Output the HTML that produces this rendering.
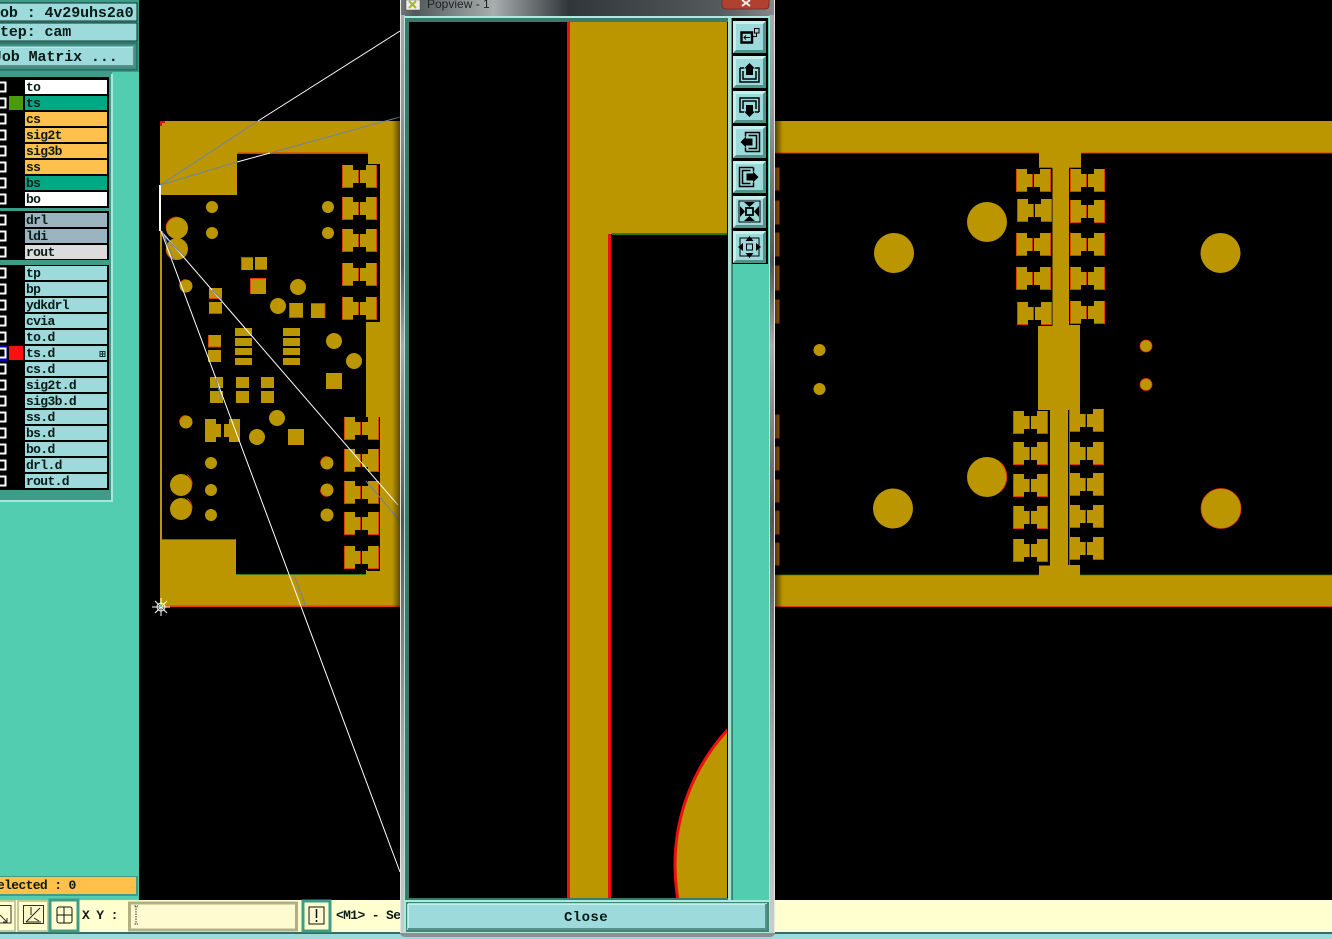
<!DOCTYPE html>
<html><head><meta charset="utf-8"><style>
html,body{margin:0;padding:0;background:#000;overflow:hidden;width:1332px;height:939px}
svg{display:block}
text{font-family:"Liberation Mono",monospace;font-weight:bold;fill:#0a1a14}
.l{font-size:13px;letter-spacing:-.65px}
.t{font-size:15px;letter-spacing:-.1px}
</style></head><body>
<svg width="1332" height="939" viewBox="0 0 1332 939" xmlns="http://www.w3.org/2000/svg" style="overflow:hidden">
<defs>
<linearGradient id="title" x1="0" x2="1" y1="0" y2="0"><stop offset="0" stop-color="#777"/><stop offset=".04" stop-color="#50585a"/><stop offset=".17" stop-color="#8a9090"/><stop offset=".25" stop-color="#a8aeae"/><stop offset=".45" stop-color="#30363a"/><stop offset=".85" stop-color="#555a5c"/><stop offset="1" stop-color="#888"/></linearGradient>
<linearGradient id="sideV" x1="0" x2="0" y1="0" y2="1"><stop offset="0" stop-color="#aaa"/><stop offset=".1" stop-color="#999"/><stop offset=".27" stop-color="#555"/><stop offset=".36" stop-color="#aaa"/><stop offset=".55" stop-color="#555"/><stop offset=".8" stop-color="#aaa"/><stop offset="1" stop-color="#ccc"/></linearGradient>
<linearGradient id="fade" x1="0" x2="1" y1="0" y2="0"><stop offset="0" stop-color="#000" stop-opacity=".55"/><stop offset="1" stop-color="#000" stop-opacity="0"/></linearGradient>
<linearGradient id="fade2" x1="1" x2="0" y1="0" y2="0"><stop offset="0" stop-color="#000" stop-opacity=".5"/><stop offset="1" stop-color="#000" stop-opacity="0"/></linearGradient>
<g id="pad2"><path d="M0 0H11V5H16V18H11V23H0Z" fill="#bc9600"/><path d="M.5 0V22.500H11M16.500 5V18" fill="none" stroke="#e03a00" stroke-width=".9"/><path d="M35 0H24V5H18V18H24V23H35Z" fill="#bc9600"/><path d="M24 22.500H34.500V0" fill="none" stroke="#e03a00" stroke-width=".9"/></g>
<g id="cb"><rect x="-3" y="-.5" width="8.5" height="9" fill="#000" stroke="#fff" stroke-width="2"/></g>
<g id="btn"><rect width="33" height="32" fill="#9cdadc"/><path d="M0 0H33L30 3H3V29L0 32Z" fill="#c6f0ec"/><path d="M33 0V32H0L3 29H30V3Z" fill="#4f9488"/></g>
<g id="arr"><path d="M7 12V26H26V12H22M11 12H7" fill="none" stroke="#000" stroke-width="1.500"/><path d="M10 15V23H23V15" fill="none" stroke="#000" stroke-width="1.500"/><path d="M16.500 7L22 12.500H20V19H13V12.500H11Z" fill="#000"/></g>
</defs>

<rect width="1332" height="939" fill="#000"/>

<!-- left panel -->
<rect x="0" y="0" width="139" height="900" fill="#52cdb0"/>
<rect x="0" y="0" width="139" height="72" fill="#3f9c88"/>
<rect x="-2" y="3" width="139" height="18" fill="#9cdadc" stroke="#10302a"/>
<rect x="-2" y="23" width="139" height="18" fill="#9cdadc" stroke="#10302a"/>
<rect x="-2" y="43" width="139" height="27" fill="#3f8c80" stroke="#1d5a50"/>
<rect x="-2" y="47" width="136" height="19" fill="#9cdadc"/>
<path d="M-2 47H134" stroke="#c8f0f0"/><path d="M134 47V66H-2" stroke="#5a8e88" stroke-width="2" fill="none"/>
<text class="t" x="0" y="17">ob : 4v29uhs2a0</text>
<text class="t" x="0" y="36">tep: cam</text>
<text class="t" x="-7" y="61">Job Matrix ...</text>

<rect x="0" y="72" width="112" height="430" fill="#3f9c88"/>
<rect x="111" y="74" width="2" height="427" fill="#a8e8d8"/>
<rect x="0" y="500" width="113" height="2" fill="#a8e8d8"/>
<rect x="0" y="77" width="109" height="131" fill="#000"/>
<rect x="0" y="211" width="109" height="49" fill="#000"/>
<rect x="0" y="265" width="109" height="225" fill="#000"/>

<rect x="25" y="80" width="82" height="14" fill="#fff"/>
<rect x="25" y="96" width="82" height="14" fill="#00a884"/>
<rect x="25" y="112" width="82" height="14" fill="#ffc04c"/>
<rect x="25" y="128" width="82" height="14" fill="#ffc04c"/>
<rect x="25" y="144" width="82" height="14" fill="#ffc04c"/>
<rect x="25" y="160" width="82" height="14" fill="#ffc04c"/>
<rect x="25" y="176" width="82" height="14" fill="#00a884"/>
<rect x="25" y="192" width="82" height="14" fill="#fff"/>
<rect x="25" y="213" width="82" height="14" fill="#9cb4c0"/>
<rect x="25" y="229" width="82" height="14" fill="#9cb4c0"/>
<rect x="25" y="245" width="82" height="14" fill="#dcdcdc"/>
<g fill="#9cdadc">
<rect x="25" y="266" width="82" height="14"/><rect x="25" y="282" width="82" height="14"/><rect x="25" y="298" width="82" height="14"/><rect x="25" y="314" width="82" height="14"/><rect x="25" y="330" width="82" height="14"/><rect x="25" y="346" width="82" height="14"/><rect x="25" y="362" width="82" height="14"/><rect x="25" y="378" width="82" height="14"/><rect x="25" y="394" width="82" height="14"/><rect x="25" y="410" width="82" height="14"/><rect x="25" y="426" width="82" height="14"/><rect x="25" y="442" width="82" height="14"/><rect x="25" y="458" width="82" height="14"/><rect x="25" y="474" width="82" height="14"/>
</g>
<rect x="9" y="96" width="14" height="14" fill="#4a9a0c"/>
<rect x="9" y="346" width="14" height="14" fill="#ff1010"/>
<rect x="0" y="345" width="7" height="16" fill="#0000b0"/>

<use href="#cb" y="83"/><use href="#cb" y="99"/><use href="#cb" y="115"/><use href="#cb" y="131"/><use href="#cb" y="147"/><use href="#cb" y="163"/><use href="#cb" y="179"/><use href="#cb" y="195"/><use href="#cb" y="216"/><use href="#cb" y="232"/><use href="#cb" y="248"/><use href="#cb" y="269"/><use href="#cb" y="285"/><use href="#cb" y="301"/><use href="#cb" y="317"/><use href="#cb" y="333"/><use href="#cb" y="349"/><use href="#cb" y="365"/><use href="#cb" y="381"/><use href="#cb" y="397"/><use href="#cb" y="413"/><use href="#cb" y="429"/><use href="#cb" y="445"/><use href="#cb" y="461"/><use href="#cb" y="477"/>

<text class="l" x="26" y="91">to</text><text class="l" x="26" y="107">ts</text><text class="l" x="26" y="123">cs</text><text class="l" x="26" y="139">sig2t</text><text class="l" x="26" y="155">sig3b</text><text class="l" x="26" y="171">ss</text><text class="l" x="26" y="187">bs</text><text class="l" x="26" y="203">bo</text>
<text class="l" x="26" y="224">drl</text><text class="l" x="26" y="240">ldi</text><text class="l" x="26" y="256">rout</text>
<text class="l" x="26" y="277">tp</text><text class="l" x="26" y="293">bp</text><text class="l" x="26" y="309">ydkdrl</text><text class="l" x="26" y="325">cvia</text><text class="l" x="26" y="341">to.d</text><text class="l" x="26" y="357">ts.d</text><text class="l" x="26" y="373">cs.d</text><text class="l" x="26" y="389">sig2t.d</text><text class="l" x="26" y="405">sig3b.d</text><text class="l" x="26" y="421">ss.d</text><text class="l" x="26" y="437">bs.d</text><text class="l" x="26" y="453">bo.d</text><text class="l" x="26" y="469">drl.d</text><text class="l" x="26" y="485">rout.d</text>
<path d="M100 351.500h5v5h-5zM102.500 351.500v5M100 354h5" fill="none" stroke="#10302a"/>

<rect x="0" y="876" width="138" height="20" fill="#3f9c88"/>
<rect x="-1" y="877" width="137" height="17" fill="#ffc04c"/>
<text class="l" x="-3" y="889">elected : 0</text>

<!-- bottom bar -->
<rect x="0" y="900" width="1332" height="32" fill="#ffffd0"/>
<rect x="0" y="932" width="1332" height="2" fill="#3a6a60"/>
<rect x="0" y="934" width="1332" height="5" fill="#9cdadc"/>
<rect x="-2" y="901" width="17" height="30" fill="#ffffd0" stroke="#c8c8a0" stroke-width="2"/>
<path d="M-1 905.500H11V923H-1M0 915L7 922M7 918V922H3" fill="none" stroke="#333"/>
<rect x="18" y="901" width="30" height="30" fill="#ffffd0" stroke="#c8c8a0" stroke-width="2"/>
<rect x="23.500" y="905.500" width="20" height="18" fill="#fff8c8" stroke="#333"/>
<path d="M26 922L40 908M26 922H41M31 907V915M34 918l5 3" fill="none" stroke="#222"/>
<rect x="50" y="900" width="28" height="31" fill="#ffffd0" stroke="#3f9c88" stroke-width="3"/>
<rect x="57" y="907" width="15" height="16" rx="2" fill="none" stroke="#111"/><path d="M57 915H72M64 907V923" stroke="#111"/>
<text class="l" x="82" y="919">X Y :</text>
<rect x="129.500" y="903" width="167" height="27" fill="#fffbd0" stroke="#b0b080" stroke-width="3"/>
<path d="M136 906V924M134.500 906H138M134.500 924H138" stroke="#333" stroke-dasharray="1.500 1" fill="none"/>
<rect x="303" y="901" width="27" height="30" fill="#ffffd0" stroke="#3f9c88" stroke-width="3"/>
<rect x="309" y="907" width="15" height="17" fill="#fffbd0" stroke="#111"/><path d="M316.500 909V918M316.500 920V922" stroke="#111" stroke-width="1.500"/>
<text class="l" x="336" y="919">&lt;M1&gt; - Se</text>

<!-- left PCB -->
<path d="M160 121H400V607H160ZM162 231V540H236V575H366V570H380V417H366V322H379V164H368V153H237V195H160V231Z" fill="#bc9600" fill-rule="evenodd"/>
<rect x="237" y="152.500" width="131" height="1.500" fill="#e03a00"/>
<path d="M160 121h5v2h-3v3h-2z" fill="#e01010"/>
<rect x="163" y="605.500" width="237" height="1.500" fill="#e03a00"/>
<path d="M162 539.500H236M236 574.500H366" stroke="#3a7a10"/>
<path d="M379.500 164V321.500H367M379.500 417V570.500H367" fill="none" stroke="#000"/>

<use href="#pad2" x="342" y="165"/><use href="#pad2" x="342" y="197"/><use href="#pad2" x="342" y="229"/><use href="#pad2" x="342" y="263"/><use href="#pad2" x="342" y="297"/>
<use href="#pad2" x="344" y="417"/><use href="#pad2" x="344" y="449"/><use href="#pad2" x="344" y="481"/><use href="#pad2" x="344" y="512"/><use href="#pad2" x="344" y="546"/>
<g fill="#bc9600">
<circle cx="212" cy="207" r="6"/><circle cx="212" cy="233" r="6"/><circle cx="328" cy="207" r="6"/><circle cx="328" cy="233" r="6"/>
<circle cx="177" cy="228" r="11"/><circle cx="177" cy="249" r="11"/><circle cx="186" cy="286" r="6.500"/><circle cx="298" cy="287" r="8"/><circle cx="278" cy="306" r="8"/><circle cx="334" cy="341" r="8"/><circle cx="354" cy="361" r="8"/>
<rect x="241" y="257" width="12" height="13"/><rect x="255" y="257" width="12" height="13"/><rect x="250" y="278" width="16" height="16"/>
<rect x="209" y="288" width="13" height="11"/><rect x="209" y="302" width="13" height="12"/><rect x="289" y="303" width="14" height="15"/><rect x="311" y="303" width="14" height="15"/>
<rect x="208" y="335" width="13" height="12"/><rect x="208" y="350" width="13" height="12"/>
<rect x="235" y="328" width="17" height="8"/><rect x="235" y="338" width="17" height="8"/><rect x="235" y="348" width="17" height="7"/><rect x="235" y="358" width="17" height="7"/>
<rect x="283" y="328" width="17" height="8"/><rect x="283" y="338" width="17" height="8"/><rect x="283" y="348" width="17" height="7"/><rect x="283" y="358" width="17" height="7"/>
<rect x="210" y="377" width="13" height="11"/><rect x="210" y="391" width="13" height="12"/><rect x="236" y="377" width="13" height="11"/><rect x="236" y="391" width="13" height="12"/><rect x="261" y="377" width="13" height="11"/><rect x="261" y="391" width="13" height="12"/>
<rect x="326" y="373" width="16" height="16"/>
<circle cx="186" cy="422" r="6.500"/><circle cx="277" cy="418" r="8"/><circle cx="257" cy="437" r="8"/><rect x="288" y="429" width="16" height="16"/>
<path d="M205 419H216V424H221V437H216V442H205ZM240 419H229V424H224V437H229V442H240Z"/>
<circle cx="211" cy="463" r="6"/><circle cx="211" cy="490" r="6"/><circle cx="211" cy="515" r="6"/><circle cx="327" cy="463" r="6.500"/><circle cx="327" cy="490" r="6.500"/><circle cx="327" cy="515" r="6.500"/><circle cx="181" cy="485" r="11"/><circle cx="181" cy="509" r="11"/>
</g>
<g fill="none" stroke="#e03a00" stroke-width=".9">
<path d="M241.500 270V257.500H253M255 269.500H267M250.500 294V278.500H266M289.500 303.500V317.500H303M325 318V303.500H311M208.500 335V347H221M209 313.500H222M209 298.500H222"/>
<path d="M166 228A11 11 0 0 1 177 217M166 249A11 11 0 0 0 170 257.500M179.500 286A6.500 6.500 0 0 1 186 279.500M320.500 463A6.500 6.500 0 0 1 327 456.500M320.500 490A6.500 6.500 0 0 0 327 496.500M179.500 422A6.500 6.500 0 0 1 186 415.500M187 474.500A11 11 0 0 1 192 485M187 498.500A11 11 0 0 1 192 509"/>
</g>

<!-- leader lines -->
<g fill="none">
<path d="M258 121L400 31M237 162L270 153M161 231L398 505M161 231L400 872" stroke="#fff"/>
<path d="M160 185V231" stroke="#fff" stroke-width="2"/>
<path d="M160 185L258 121M160 185L237 162M270 153L400 117M366 481L400 521M294 575L306 607" stroke="#6e84a0"/>
<path d="M162 231L174 260M164 236L184 256M212 290L222 300M216 378L222 402" stroke="#6e84a0"/>
</g>
<!-- cursor -->
<path d="M152 607H170M161 598V616M155 601L167 613M155 613L167 601" stroke="#fff" fill="none"/>
<circle cx="161" cy="607" r="4" fill="none" stroke="#fff"/><circle cx="161" cy="606" r="1.200" fill="#4cc"/>

<!-- right PCB -->
<rect x="775" y="121" width="557" height="32" fill="#bc9600"/>
<rect x="775" y="575" width="557" height="32" fill="#bc9600"/>
<rect x="775" y="152.500" width="264" height="1" fill="#e03a00"/><rect x="1081" y="152.500" width="251" height="1" fill="#e03a00"/>
<rect x="775" y="606" width="557" height="1" fill="#e03a00"/>
<path d="M775 575H1039M1080 575H1332" stroke="#3a7a10" stroke-width=".8"/>
<path d="M1039 153H1081V168H1069V325H1080V410H1068V565H1080V575H1039V565H1049V410H1038V325H1052V168H1039Z" fill="#bc9600"/>
<path d="M1039 167.500H1052M1069 167.500H1081M1069.500 409V565" stroke="#e03a00" fill="none"/>
<path d="M1015 325.500H1052V168M1069.500 168V325M1049 410.500H1013M1049.500 410V565H1013" stroke="#000" fill="none"/>
<use href="#pad2" x="1016" y="169"/><use href="#pad2" x="1017" y="199"/><use href="#pad2" x="1016" y="233"/><use href="#pad2" x="1016" y="267"/><use href="#pad2" x="1017" y="302"/>
<use href="#pad2" x="1070" y="169"/><use href="#pad2" x="1070" y="200"/><use href="#pad2" x="1070" y="233"/><use href="#pad2" x="1070" y="267"/><use href="#pad2" x="1070" y="301"/>
<use href="#pad2" x="1013" y="411"/><use href="#pad2" x="1013" y="442"/><use href="#pad2" x="1013" y="474"/><use href="#pad2" x="1013" y="506"/><use href="#pad2" x="1013" y="539"/>
<use href="#pad2" x="1069" y="409"/><use href="#pad2" x="1069" y="442"/><use href="#pad2" x="1069" y="473"/><use href="#pad2" x="1069" y="505"/><use href="#pad2" x="1069" y="537"/>
<g fill="#bc9600">
<circle cx="894" cy="253" r="20"/><circle cx="987" cy="222" r="20"/><circle cx="1220.500" cy="253" r="20"/>
<circle cx="819.500" cy="350" r="6"/><circle cx="819.500" cy="389" r="6"/><circle cx="1146" cy="346" r="6"/><circle cx="1146" cy="384.500" r="6"/>
<circle cx="893" cy="508.500" r="20"/><circle cx="987" cy="477" r="20"/><circle cx="1221" cy="508.500" r="20"/>
</g>
<path d="M1001 463A20 20 0 0 1 1001 491" fill="none" stroke="#e03a00"/>
<circle cx="1221" cy="508.500" r="20" fill="none" stroke="#e03a00" stroke-width=".8"/>
<circle cx="1146" cy="346" r="6" fill="none" stroke="#e03a00" stroke-width=".8"/><circle cx="1146" cy="384.500" r="6" fill="none" stroke="#e03a00" stroke-width=".8"/>
<g fill="#a87400" stroke="#d84a00">
<rect x="770" y="168" width="9" height="22"/><rect x="770" y="201" width="9" height="23"/><rect x="770" y="233" width="9" height="23"/><rect x="770" y="266" width="9" height="24"/><rect x="770" y="300" width="9" height="23"/>
<rect x="770" y="415" width="9" height="23"/><rect x="770" y="447" width="9" height="23"/><rect x="770" y="480" width="9" height="22"/><rect x="770" y="511" width="9" height="23"/><rect x="770" y="543" width="9" height="22"/>
</g>
<rect x="775" y="0" width="8" height="900" fill="url(#fade)"/>
<rect x="392" y="100" width="8" height="520" fill="url(#fade2)"/>

<!-- popup window -->
<path d="M400 0H775V932Q775 937 769 937H406Q400 937 400 932Z" fill="#8c9090"/>
<rect x="400" y="0" width="375" height="17" fill="url(#title)"/>
<rect x="400" y="15" width="5" height="918" fill="url(#sideV)"/>
<rect x="769" y="15" width="6" height="918" fill="url(#sideV)"/>
<rect x="400" y="0" width="1" height="933" fill="#dfe4e4"/>
<rect x="774" y="0" width="1" height="933" fill="#dfe4e4"/>
<rect x="406" y="0" width="14" height="10" fill="#eee" stroke="#555" stroke-width=".5"/>
<path d="M409 1L416 8M416 1L409 8" stroke="#a8b820" stroke-width="2"/>
<text x="427" y="8" style="font-family:'Liberation Sans',sans-serif;font-weight:normal;font-size:12px;fill:#222">Popview - 1</text>
<path d="M722 -2H769V5Q769 9 765 9H726Q722 9 722 5Z" fill="#b04030" stroke="#6a2a20" stroke-width=".8"/>
<path d="M742 0L750 6M750 0L742 6" stroke="#eee" stroke-width="2"/>

<rect x="404" y="16" width="366" height="917" fill="#b0e8e0"/>
<rect x="405" y="18" width="364" height="882" fill="#3a7a68"/>
<rect x="409" y="22" width="319" height="876" fill="#000"/>
<svg x="409" y="22" width="318" height="876" viewBox="409 22 318 876">
<path d="M569 22H728V234H611V898H569Z" fill="#bc9600"/>
<path d="M568.500 22V898" stroke="#ee1010" stroke-width="3"/>
<path d="M609.500 234V898" stroke="#ee1010" stroke-width="3"/>
<path d="M612 234H728" stroke="#2a7a10" stroke-width="2"/>
<circle cx="875" cy="865" r="200" fill="#bc9600" stroke="#ee1010" stroke-width="3"/>
</svg>
<rect x="728" y="18" width="4" height="882" fill="#a8e0d4"/>
<rect x="732" y="18" width="37" height="882" fill="#52cdb0"/>
<rect x="731.500" y="18" width="1" height="882" fill="#12332c"/>
<rect x="732" y="18" width="36" height="246" fill="#000"/>

<!-- tool buttons -->
<use href="#btn" x="733" y="21"/><use href="#btn" x="733" y="56"/><use href="#btn" x="733" y="91"/><use href="#btn" x="733" y="126"/><use href="#btn" x="733" y="161"/><use href="#btn" x="733" y="196"/><use href="#btn" x="733" y="231"/>
<g transform="translate(733 21)">
<path d="M8.500 11.500H19V21.500H8.500Z" fill="none" stroke="#000" stroke-width="2.400"/>
<path d="M11 16.500H17M13 14.500L11 16.500L13 18.500" fill="none" stroke="#000"/>
<path d="M20 15.500H23.500V12" fill="none" stroke="#000"/>
<path d="M21.500 7.500H26V12H21.500Z" fill="none" stroke="#000"/>
</g>
<use href="#arr" x="733" y="56"/>
<use href="#arr" transform="translate(733 91) rotate(180 16.500 16.500)"/>
<use href="#arr" transform="translate(733 126) rotate(-90 16.500 16)"/>
<use href="#arr" transform="translate(733 161) rotate(90 16.500 16)"/>
<g transform="translate(733 196)">
<rect x="6" y="5" width="21" height="21" fill="none" stroke="#000"/>
<rect x="13" y="12" width="7" height="7" fill="none" stroke="#000" stroke-width="1.800"/>
<path d="M16.500 11L11 6H22ZM16.500 20L11 25H22ZM12 15.500L7 10V21ZM21 15.500L26 10V21Z" fill="#000"/>
</g>
<g transform="translate(733 231)">
<rect x="7" y="7" width="19" height="18" fill="none" stroke="#000"/>
<rect x="13.500" y="13" width="6" height="6" fill="none" stroke="#000"/>
<path d="M16.500 5L12.500 10H20.500ZM16.500 27L12.500 22H20.500ZM5 16L10 12V20ZM28 16L23 12V20Z" fill="#000"/>
</g>

<!-- close button -->
<rect x="405" y="900" width="364" height="32" fill="#b0e8e0"/>
<rect x="406" y="902" width="363" height="30" fill="#3a8a78"/>
<rect x="408" y="904" width="359" height="26" fill="#9cdadc"/>
<path d="M408 904H767" stroke="#d0f4f0" stroke-width="1.500"/><path d="M408 904V930" stroke="#d0f4f0" stroke-width="1.500"/>
<path d="M766 904V929H408" stroke="#5a8e88" stroke-width="2" fill="none"/>
<text x="586" y="921" text-anchor="middle" style="font-size:14px;letter-spacing:.4px">Close</text>
</svg>
</body></html>
